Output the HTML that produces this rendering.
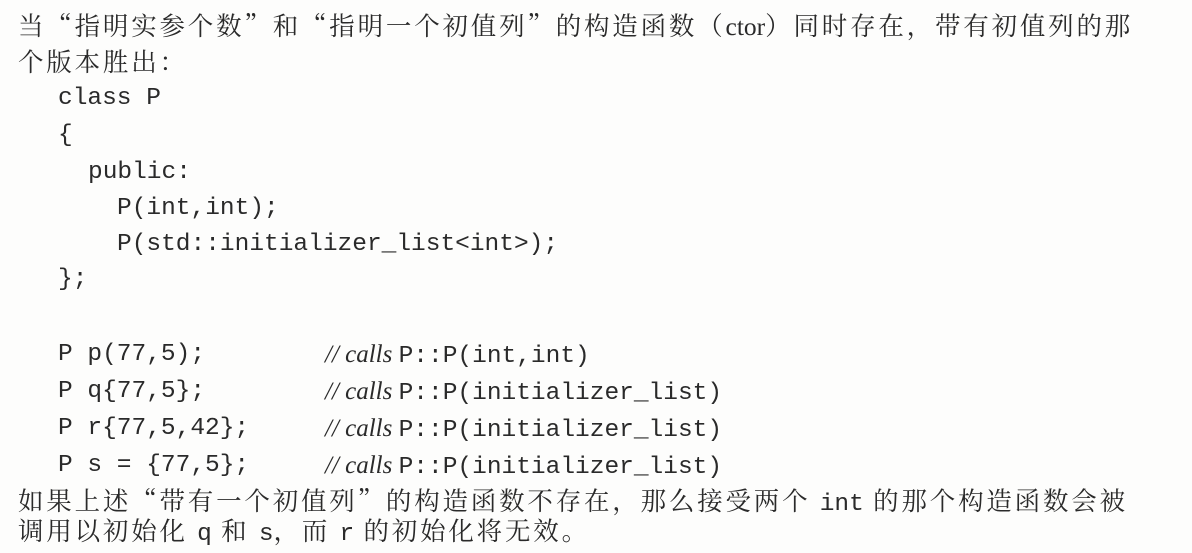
<!DOCTYPE html>
<html><head><meta charset="utf-8"><style>
html,body{margin:0;padding:0;background:#fdfdfc;}
body{width:1192px;height:545px;position:relative;overflow:hidden;color:#2a2a2a;}
.l{position:absolute;left:0;white-space:pre;height:36px;line-height:36px;}
.cn{font-family:"Noto Serif CJK SC","Liberation Serif",serif;font-size:25.5px;letter-spacing:2.8px;left:18px;}
.lat{font-family:"Liberation Serif",serif;letter-spacing:0;}
.cd{font-family:"Liberation Mono",monospace;font-size:24.5px;}
.m{font-family:"Liberation Mono",monospace;font-size:24.5px;font-style:normal;letter-spacing:0;}
.c{position:absolute;left:267px;font-family:"Liberation Serif",serif;font-style:italic;font-size:25px;}
</style></head><body>
<div class="l cn" style="top:7px">当“指明实参个数”和“指明一个初值列”的构造函数（<span class="lat">ctor</span>）同时存在，带有初值列的那</div>
<div class="l cn" style="top:43px">个版本胜出：</div>
<div class="l cd" style="top:81px;left:58px">class P</div>
<div class="l cd" style="top:118px;left:58px">{</div>
<div class="l cd" style="top:155px;left:88px">public:</div>
<div class="l cd" style="top:191px;left:117px">P(int,int);</div>
<div class="l cd" style="top:227px;left:117px">P(std::initializer_list&lt;int&gt;);</div>
<div class="l cd" style="top:262px;left:58px">};</div>
<div class="l cd" style="top:337px;left:58px">P p(77,5);<span class="c">// calls <span class="m">P::P(int,int)</span></span></div>
<div class="l cd" style="top:374px;left:58px">P q{77,5};<span class="c">// calls <span class="m">P::P(initializer_list)</span></span></div>
<div class="l cd" style="top:411px;left:58px">P r{77,5,42};<span class="c">// calls <span class="m">P::P(initializer_list)</span></span></div>
<div class="l cd" style="top:448px;left:58px">P s = {77,5};<span class="c">// calls <span class="m">P::P(initializer_list)</span></span></div>
<div class="l cn" style="top:482px">如果上述“带有一个初值列”的构造函数不存在，那么接受两个 <span class="m">int</span> 的那个构造函数会被</div>
<div class="l cn" style="top:512px">调用以初始化 <span class="m">q</span> 和 <span class="m">s</span>，而 <span class="m">r</span> 的初始化将无效。</div>
</body></html>
